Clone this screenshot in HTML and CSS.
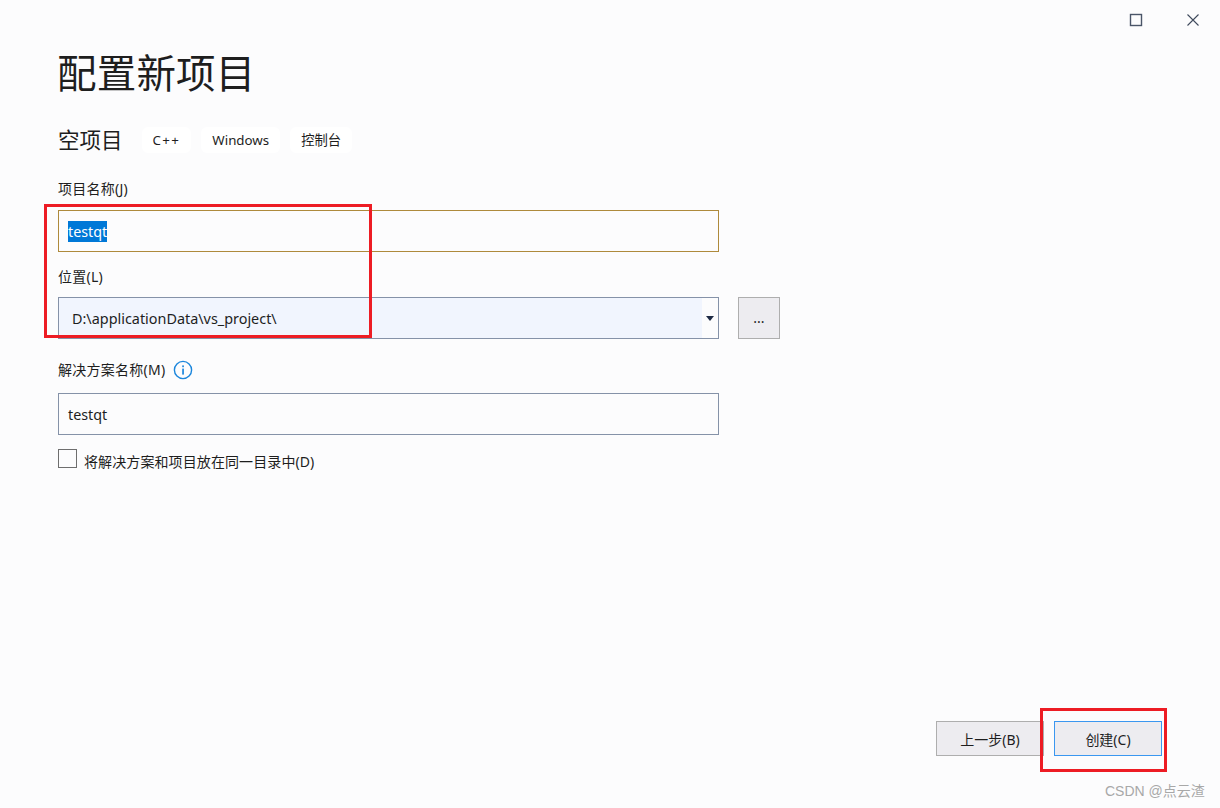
FILE: index.html
```html
<!DOCTYPE html>
<html lang="zh-CN">
<head>
  <meta charset="UTF-8">
  <title>配置新项目</title>
  <link rel="stylesheet" href="styles.css">
</head>
<body>
  <div class="window">
    <div class="titlebar">
      <svg class="win-icon" width="14" height="14" viewBox="0 0 14 14"><rect x="1.5" y="1.5" width="11" height="11" fill="none" stroke="#4a5568" stroke-width="1.4"/></svg>
      <svg class="win-icon" width="14" height="14" viewBox="0 0 14 14"><path d="M1.5 1.5L12.5 12.5M12.5 1.5L1.5 12.5" fill="none" stroke="#3f4a5c" stroke-width="1.1"/></svg>
    </div>

    <h1>配置新项目</h1>

    <div class="template">
      <h2>空项目</h2>
      <span class="chip chip-cpp">C++</span>
      <span class="chip">Windows</span>
      <span class="chip">控制台</span>
    </div>

    <label class="field-label label-name">项目名称(J)</label>
    <div class="textbox textbox-focus"><span class="selected">testqt</span></div>

    <label class="field-label label-location">位置(L)</label>
    <div class="location-row">
      <div class="combo">
        <div class="combo-text">D:\applicationData\vs_project\</div>
        <div class="combo-arrow"><svg width="8" height="5" viewBox="0 0 8 5"><path d="M0 0H8L4 5Z" fill="#1e2a44"/></svg></div>
      </div>
      <button class="btn btn-browse">...</button>
    </div>

    <div class="field-label label-solution">
      <span>解决方案名称(M)</span>
      <svg width="20" height="20" viewBox="0 0 20 20"><circle cx="10" cy="10" r="8.6" fill="none" stroke="#1b86dc" stroke-width="1.4"/><rect x="9.2" y="8.6" width="1.7" height="6" fill="#1b86dc"/><rect x="9.2" y="5.4" width="1.7" height="1.8" fill="#1b86dc"/></svg>
    </div>
    <div class="textbox">testqt</div>

    <div class="check-row">
      <span class="checkbox"></span>
      <span>将解决方案和项目放在同一目录中(D)</span>
    </div>

    <div class="actions">
      <button class="btn btn-action">上一步(B)</button>
      <button class="btn btn-action btn-default">创建(C)</button>
    </div>
  </div>

  <div class="mark mark-fields"></div>
  <div class="mark mark-create"></div>
  <div class="watermark">CSDN @点云渣</div>
</body>
</html>
```

FILE: styles.css
```css
html, body {
  margin: 0;
  height: 100%;
}
body {
  background-color: #fcfcfd;
  color: #1e1e1e;
  font-family: "Noto Sans", "Noto Sans CJK SC", sans-serif;
  font-size: 14px;
  overflow: hidden;
  position: relative;
}
.window {
  height: 808px;
  box-sizing: border-box;
  padding: 0 58px;
  position: relative;
}
.titlebar {
  display: flex;
  justify-content: flex-end;
  gap: 43px;
  padding: 13px 20px 0 0;
  margin-right: -58px;
  height: 27px;
  box-sizing: border-box;
}
h1 {
  font-size: 39.5px;
  font-weight: 400;
  line-height: 56px;
  margin: 18px 0 0 -1px;
  letter-spacing: 0.2px;
}
.template {
  display: flex;
  align-items: center;
  margin-top: 26px;
  height: 26px;
}
h2 {
  font-size: 21.5px;
  font-weight: 400;
  margin: 0 19px 0 0;
  line-height: 26px;
}
.chip {
  background-color: #fff;
  border-radius: 6px;
  height: 26px;
  line-height: 26px;
  padding: 0 11px;
  margin-right: 10px;
  font-size: 13.3px;
}
.chip-cpp {
  letter-spacing: 1.4px;
}
.field-label {
  display: block;
  line-height: 20px;
  font-size: 14px;
  letter-spacing: 0.25px;
}
.label-name {
  margin-top: 26px;
  margin-bottom: 11px;
}
.label-location {
  margin-top: 15px;
  margin-bottom: 10px;
}
.label-solution {
  display: flex;
  align-items: center;
  gap: 8px;
  margin-top: 21px;
  margin-bottom: 13px;
}
.textbox {
  width: 661px;
  height: 42px;
  box-sizing: border-box;
  border: 1px solid #8592a8;
  padding-left: 9px;
  line-height: 42px;
  font-size: 14.3px;
}
.textbox-focus {
  border-color: #ae8a3c;
}
.selected {
  background-color: #0078d7;
  color: #fff;
  display: inline-block;
  line-height: 21px;
  vertical-align: middle;
  margin-top: -3px;
}
.location-row {
  display: flex;
  gap: 19px;
}
.combo {
  width: 661px;
  height: 42px;
  box-sizing: border-box;
  border: 1px solid #8592a8;
  display: flex;
}
.combo-text {
  flex: 1;
  background-color: #f1f5fe;
  padding-left: 13px;
  line-height: 42px;
  font-size: 14.4px;
}
.combo-arrow {
  width: 16px;
  display: flex;
  align-items: center;
  justify-content: center;
}
.btn {
  font-family: inherit;
  font-size: 14px;
  color: #1e1e1e;
  background-color: #edecf0;
  border: 1px solid #aeaeae;
  padding: 0;
  margin: 0;
}
.btn-browse {
  width: 42px;
  height: 42px;
  line-height: 40px;
}
.check-row {
  display: flex;
  align-items: center;
  gap: 7px;
  margin-top: 14px;
  font-size: 14px;
  height: 19px;
  letter-spacing: 0.1px;
}
.check-row span:last-child {
  padding-top: 5px;
}
.checkbox {
  width: 19px;
  height: 19px;
  box-sizing: border-box;
  border: 1px solid #6e6e6e;
}
.actions {
  position: absolute;
  top: 721px;
  right: 58px;
  display: flex;
  gap: 10px;
}
.btn-action {
  width: 108px;
  height: 35px;
}
.btn-default {
  border-color: #3b97f0;
}
.mark {
  position: absolute;
  border: 3px solid #ed1c24;
  box-sizing: border-box;
}
.mark-fields {
  left: 44px;
  top: 204px;
  width: 328px;
  height: 134px;
}
.mark-create {
  left: 1040px;
  top: 708px;
  width: 127px;
  height: 64px;
}
.watermark {
  position: absolute;
  left: 1105px;
  top: 781px;
  font-family: "Liberation Sans", "Noto Sans CJK SC", sans-serif;
  font-size: 14px;
  line-height: 20px;
  color: #a8a8a8;
}
```
